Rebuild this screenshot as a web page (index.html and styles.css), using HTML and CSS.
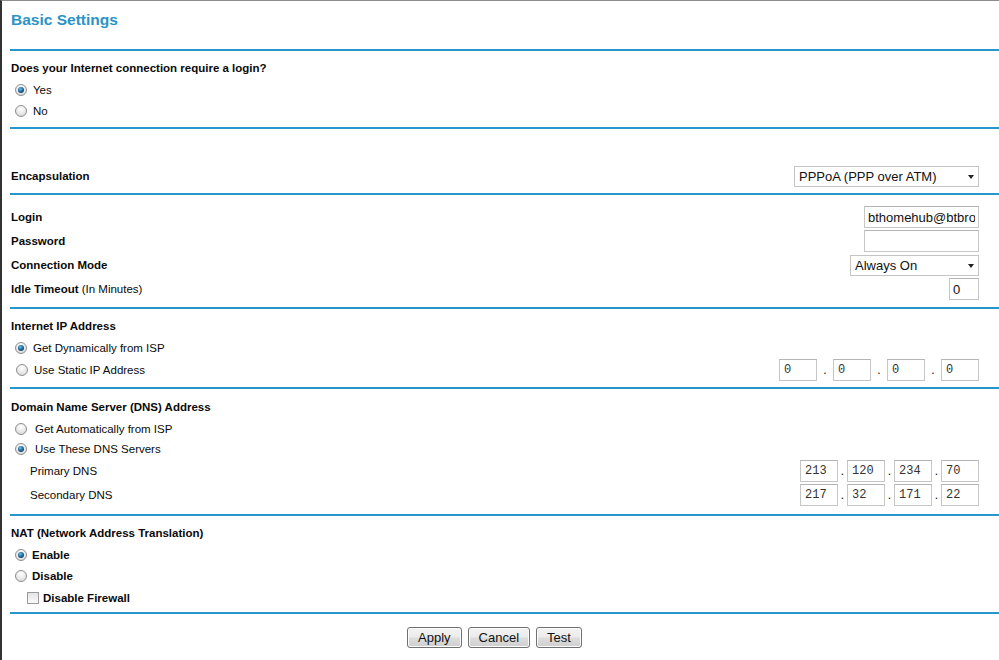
FILE: index.html
```html
<!DOCTYPE html>
<html lang="en">
<head>
  <meta charset="UTF-8" />
  <title>Basic Settings</title>
  <link rel="stylesheet" href="styles.css">
</head>
<body>
  <div class="page">
    <div class="head"><h1>Basic Settings</h1></div>
    <div class="rule"></div>

    <!-- login question -->
    <div class="sec s-login">
      <div class="row r22 bold">Does your Internet connection require a login?</div>
      <div class="row r21 opt"><span class="radio on"></span>Yes</div>
      <div class="row r21 opt"><span class="radio"></span>No</div>
    </div>
    <div class="rule"></div>

    <div class="sec s-encap">
      <div class="row r24 split">
        <span class="bold">Encapsulation</span>
        <div class="select w-encap">
          <select><option>PPPoA (PPP over ATM)</option></select>
        </div>
      </div>
    </div>
    <div class="rule"></div>

    <div class="sec s-account">
      <div class="row r24 split">
        <span class="bold">Login</span>
        <input class="txt w-login" type="text" value="bthomehub@btbroadband.com" />
      </div>
      <div class="row r24 split">
        <span class="bold">Password</span>
        <input class="txt w-login" type="password" value="" />
      </div>
      <div class="row r24 split">
        <span class="bold">Connection Mode</span>
        <div class="select w-mode">
          <select><option>Always On</option></select>
        </div>
      </div>
      <div class="row r24 split">
        <span><b>Idle Timeout</b> (In Minutes)</span>
        <input class="txt w-idle" type="text" value="0" />
      </div>
    </div>
    <div class="rule"></div>

    <div class="sec s-ip">
      <div class="row r22 bold">Internet IP Address</div>
      <div class="row r21 opt"><span class="radio on"></span>Get Dynamically from ISP</div>
      <div class="row r24 split">
        <span class="opt"><span class="radio"></span>Use Static IP Address</span>
        <div class="ip wide">
          <input class="oct" value="0" /><span class="dot">.</span>
          <input class="oct" value="0" /><span class="dot">.</span>
          <input class="oct" value="0" /><span class="dot">.</span>
          <input class="oct" value="0" />
        </div>
      </div>
    </div>
    <div class="rule"></div>

    <div class="sec s-dns">
      <div class="row r22 bold">Domain Name Server (DNS) Address</div>
      <div class="row r21 opt loose"><span class="radio"></span>Get Automatically from ISP</div>
      <div class="row r20 opt loose"><span class="radio on"></span>Use These DNS Servers</div>
      <div class="row r24 split">
        <span class="sub">Primary DNS</span>
        <div class="ip">
          <input class="oct" value="213" /><span class="dot">.</span>
          <input class="oct" value="120" /><span class="dot">.</span>
          <input class="oct" value="234" /><span class="dot">.</span>
          <input class="oct" value="70" />
        </div>
      </div>
      <div class="row r24 split">
        <span class="sub">Secondary DNS</span>
        <div class="ip">
          <input class="oct" value="217" /><span class="dot">.</span>
          <input class="oct" value="32" /><span class="dot">.</span>
          <input class="oct" value="171" /><span class="dot">.</span>
          <input class="oct" value="22" />
        </div>
      </div>
    </div>
    <div class="rule"></div>

    <div class="sec s-nat">
      <div class="row r22 bold">NAT (Network Address Translation)</div>
      <div class="row r21 opt tight bold"><span class="radio on"></span>Enable</div>
      <div class="row r22 opt tight bold"><span class="radio"></span>Disable</div>
      <div class="row r21 fw bold"><span class="check"></span>Disable Firewall</div>
    </div>
    <div class="rule"></div>

    <div class="actions">
      <button>Apply</button>
      <button>Cancel</button>
      <button>Test</button>
    </div>
  </div>
</body>
</html>
```

FILE: styles.css
```css
html, body {
  margin: 0;
  background: #fff;
}
body {
  font-family: 'Liberation Sans', Arial, sans-serif;
  font-size: 11.5px;
  color: #0a0a0a;
  overflow: hidden;
}
.page {
  height: 659px;
  border-top: 1px solid #8c8c8c;
  border-left: 2px solid #333;
  padding-left: 8px;
}
.head {
  height: 48px;
}
h1 {
  margin: 0;
  padding: 9px 0 0 1px;
  font-size: 15.5px;
  line-height: 20px;
  color: #2b93c6;
}
.rule {
  height: 2px;
  background: #2597cc;
}
.sec {
  padding-right: 20px;
}
.s-login { padding: 6px 20px 6px 0; }
.s-encap { padding: 35px 20px 5px 0; }
.s-account { padding: 10px 20px 6px 0; }
.s-ip { padding: 6px 20px 5px 0; }
.s-dns { padding: 7px 20px 7px 0; }
.s-nat { padding: 6px 20px 4px 0; }

.row {
  display: flex;
  align-items: center;
  padding-left: 1px;
}
.r20 { height: 20px; }
.r21 { height: 21px; }
.r22 { height: 22px; }
.r24 { height: 24px; }
.split {
  justify-content: space-between;
}
.bold, b {
  font-weight: bold;
}
.opt {
  display: flex;
  align-items: center;
  gap: 6px;
  padding-left: 5px;
}
.opt.loose { gap: 8px; }
.opt.tight { gap: 5px; }
.sub {
  padding-left: 19px;
}
.fw {
  padding-left: 17px;
  gap: 4px;
}

/* radio + checkbox */
.radio {
  width: 12px;
  height: 12px;
  box-sizing: border-box;
  border-radius: 50%;
  border: 1px solid #8e8f8f;
  background: radial-gradient(circle at 50% 30%, #fff 0%, #e6e6e6 60%, #cfcfcf 100%);
  display: flex;
  align-items: center;
  justify-content: center;
  flex: none;
}
.radio.on::after {
  content: "";
  width: 6px;
  height: 6px;
  border-radius: 50%;
  background: radial-gradient(circle at 40% 35%, #6cc4f2 0%, #1d5f95 50%, #0f2e4c 100%);
}
.check {
  width: 12px;
  height: 12px;
  box-sizing: border-box;
  border: 1px solid #9a9a9a;
  background: linear-gradient(#e4e4e4, #fafafa);
  flex: none;
}

/* fields */
input, select, button {
  font-family: 'Liberation Sans', Arial, sans-serif;
  margin: 0;
}
.txt {
  box-sizing: border-box;
  height: 22px;
  border: 1px solid #c6c6c6;
  border-top-color: #b4b4b4;
  padding: 0 3px;
  font-size: 13px;
  color: #111;
  outline: none;
}
.w-login { width: 115px; }
.w-idle { width: 30px; }
.select {
  position: relative;
}
.select select {
  appearance: none;
  -webkit-appearance: none;
  box-sizing: border-box;
  height: 21px;
  width: 100%;
  border: 1px solid #c4c4c4;
  background: #fff;
  padding: 0 14px 0 4px;
  font-size: 13px;
  color: #111;
  outline: none;
}
.select::after {
  content: "";
  position: absolute;
  right: 5px;
  top: 9px;
  border-left: 3px solid transparent;
  border-right: 3px solid transparent;
  border-top: 4px solid #222;
}
.w-encap { width: 185px; }
.w-mode { width: 129px; }

.ip {
  display: flex;
  align-items: center;
}
.oct {
  box-sizing: border-box;
  width: 38px;
  height: 22px;
  border: 1px solid #c6c6c6;
  border-top-color: #b4b4b4;
  padding: 0 4px;
  font-family: 'Liberation Mono', 'Courier New', monospace;
  font-size: 12px;
  color: #333;
  outline: none;
}
.dot {
  width: 9px;
  text-align: center;
  font-size: 12px;
}
.ip.wide .dot { width: 16px; }

/* buttons */
.actions {
  display: flex;
  justify-content: center;
  gap: 6px;
  padding: 13px 20px 0 0;
}
button {
  height: 21px;
  padding: 0 10px;
  font-size: 13px;
  color: #111;
  border: 1px solid #707070;
  border-radius: 3px;
  background: linear-gradient(#f3f3f3 0%, #ebebeb 48%, #dddddd 52%, #cfcfcf 100%);
  box-shadow: inset 0 0 0 1px #fcfcfc;
}
```
